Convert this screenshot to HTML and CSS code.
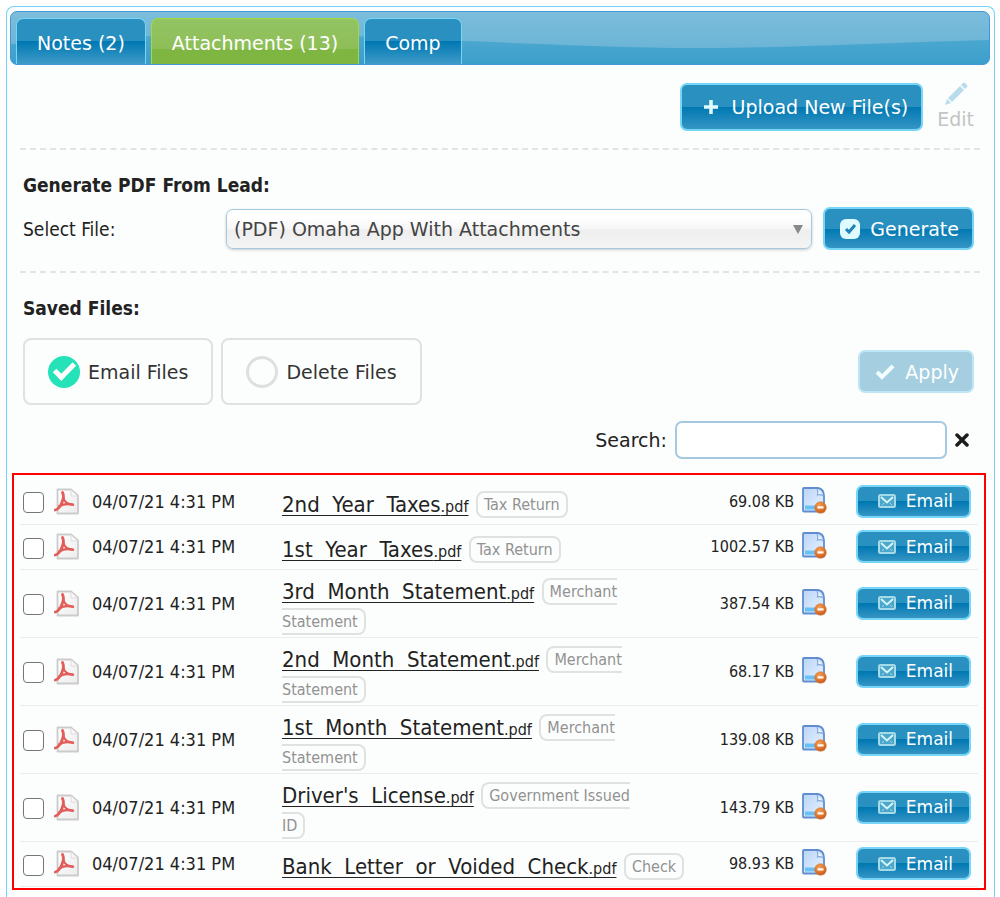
FILE: index.html
```html
<!DOCTYPE html>
<html lang="en">

<head>
    <meta charset="UTF-8">
    <meta name="viewport" content="width=device-width, initial-scale=1.0">
    <title>Attachments</title>
    <link rel="stylesheet" href="styles.css">
</head>

<body>
    <!-- shared icons -->
    <svg class="sprite" aria-hidden="true">
        <defs>
            <linearGradient id="doc-fill" x1="0" y1="0" x2="1" y2="1">
                <stop offset="0" stop-color="#b9d4f7" />
                <stop offset="1" stop-color="#eaf3fe" />
            </linearGradient>
            <radialGradient id="minus-fill" cx="0.4" cy="0.3" r="0.8">
                <stop offset="0" stop-color="#f5a053" />
                <stop offset="1" stop-color="#c9500c" />
            </radialGradient>
            <linearGradient id="paper-fill" x1="0" y1="0" x2="1" y2="1">
                <stop offset="0" stop-color="#ffffff" />
                <stop offset="1" stop-color="#ececec" />
            </linearGradient>
        </defs>
        <symbol id="pdf" viewBox="0 0 27 27">
            <path d="M3.500 1.500H17l7 6V25.500H3.500z" fill="url(#paper-fill)" stroke="#cbcbcb" stroke-width="1.800" stroke-linejoin="round" />
            <path d="M17 2v6h6.500" fill="#f7f7f7" stroke="#dcdcdc" />
            <g fill="none" stroke="#e25d59" stroke-linecap="round">
                <path d="M8.500 4.500c1.500 3 1 7-1 11-1.500 3.200-4 6-6.300 6.500" stroke-width="2.800" />
                <path d="M9.300 9c.8 4.500 3.500 7.300 9.500 7.800" stroke-width="2" />
                <path d="M5 18.500c4-2.500 9-3.200 14-1.800" stroke-width="2.400" />
            </g>
        </symbol>
        <symbol id="doc" viewBox="0 0 26 28">
            <path d="M3 2h14q6 1 6 8v15.500H3q-1 0-1-1V3q0-1 1-1z" fill="url(#doc-fill)" stroke="#5f8dcf" stroke-width="1.800" stroke-linejoin="round" />
            <path d="M16 3q1.500 3 .5 6 3-1 6 1" fill="#f5faff" stroke="#84a9dd" stroke-width="1.200" />
            <path d="M4 19.500h11V23.500H4z" fill="#66c2f5" />
            <circle cx="19.500" cy="21.500" r="5.800" fill="url(#minus-fill)" stroke="#d27a3e" stroke-width=".6" />
            <path d="M16.500 20.300h6v2.200h-6z" fill="#fff" />
        </symbol>
        <symbol id="mail" viewBox="0 0 18 14">
            <rect x="1" y="1" width="16" height="12" rx="1.500" fill="#4ba8cc" stroke="#a5dae8" stroke-width="2" />
            <path d="M3 3l6 5.500L15 3" fill="none" stroke="#d5f5f8" stroke-width="2" />
            <path d="M4 11l2-2m8 2l-2-2" stroke="#9ed8e8" />
        </symbol>
    </svg>

    <div class="panel">
        <nav class="tabs">
            <svg class="gloss" viewBox="0 0 978 52" preserveAspectRatio="none" aria-hidden="true">
                <path d="M0 0H978V28C860 31 780 36 690 36C600 36 520 31 450 29C300 20 160 20 0 32Z" />
            </svg>
            <a class="tab" href="#notes">Notes (2)</a>
            <a class="tab active" href="#attachments">Attachments (13)</a>
            <a class="tab" href="#comp">Comp</a>
        </nav>

        <div class="content">
            <div class="toolbar">
                <button class="btn btn-large">
                    <svg width="14" height="14" viewBox="0 0 14 14" aria-hidden="true">
                        <path d="M7 0v14M0 7h14" stroke="#e0fbff" stroke-width="3.500" />
                    </svg>
                    Upload New File(s)
                </button>
                <button class="edit" disabled>
                    <svg width="24" height="24" viewBox="0 0 24 24" fill="#b9dcec" aria-hidden="true">
                        <path d="M1 23l2-6 4 4zM4 16L16 4l4 4L8 20zM17 3l2-2q1-1 2 0l2 2q1 1 0 2l-2 2z" />
                    </svg>
                    Edit
                </button>
            </div>

            <section class="section">
                <h2>Generate PDF From Lead:</h2>
                <div class="generate">
                    <label for="file">Select File:</label>
                    <div class="select-wrap">
                        <select id="file">
                            <option>(PDF) Omaha App With Attachments</option>
                        </select>
                    </div>
                    <button class="btn">
                        <svg width="20" height="20" viewBox="0 0 20 20" aria-hidden="true">
                            <rect width="20" height="20" rx="6" fill="#e0fbff" />
                            <path d="M6 10l3 3 6-7" fill="none" stroke="#1d84b5" stroke-width="3" />
                        </svg>
                        Generate
                    </button>
                </div>
            </section>

            <section class="section">
                <h2>Saved Files:</h2>
                <div class="actions">
                    <label class="choice"><input type="radio" name="action" checked>Email Files</label>
                    <label class="choice"><input type="radio" name="action">Delete Files</label>
                    <button class="btn apply" disabled>
                        <svg width="20" height="16" viewBox="0 0 20 16" aria-hidden="true">
                            <path d="M2 8l5 5L18 2" fill="none" stroke="#f2fdff" stroke-width="4" />
                        </svg>
                        Apply
                    </button>
                </div>
                <div class="search">
                    <label for="search">Search:</label>
                    <input id="search" type="text">
                    <button class="clear" aria-label="Clear">
                        <svg width="14" height="14" viewBox="0 0 14 14" aria-hidden="true">
                            <path d="M2 2l10 10M12 2L2 12" stroke="#1c1c1c" stroke-width="3.500" stroke-linecap="round" />
                        </svg>
                    </button>
                </div>
            </section>
        </div>

        <div class="files">
            <table>
                <tbody id="rows"></tbody>
            </table>
        </div>
    </div>

    <script src="script.js"></script>
</body>

</html>
```

FILE: styles.css
```css
* {
    box-sizing: border-box;
}

body {
    margin: 0;
    padding: 6px 5px 0 6px;
    min-height: 100vh;
    display: flex;
    overflow: hidden;
    font-family: "DejaVu Sans Condensed", "DejaVu Sans", sans-serif;
    font-size: 19px;
    color: #222;
}

.sprite {
    position: absolute;
    width: 0;
    height: 0;
}

.panel {
    flex: 1;
    min-width: 0;
    padding: 4px 4px 0 3px;
    border: 1px solid #76d3fa;
    border-bottom: 0;
    border-radius: 8px 8px 0 0;
    background: #fcfefd;
}

/* tab bar */
.tabs {
    position: relative;
    display: flex;
    align-items: flex-end;
    gap: 5px;
    height: 54px;
    padding: 0 5px;
    overflow: hidden;
    border: 1px solid #4297d7;
    border-radius: 7px;
    background: linear-gradient(#5cb0d4, #3b9fcb);
}

.gloss {
    position: absolute;
    inset: 0;
    width: 100%;
    height: 100%;
    fill: rgba(200, 220, 235, 0.3);
}

.tab {
    position: relative;
    height: 46px;
    padding: 0 20px;
    border: 1px solid #77d5f7;
    border-bottom: 0;
    border-radius: 7px 7px 0 0;
    background: linear-gradient(#2a90c0 50%, #0078b2 50%, #3f9bc8);
    color: #fff;
    font-family: "DejaVu Sans", sans-serif;
    font-size: 19px;
    line-height: 48px;
    text-decoration: none;
}

.tab.active {
    border-color: #a5d93c;
    background: linear-gradient(#93c464, #8dbe56 66%, #7fb641 66%);
}

.content {
    padding: 0 10px;
}

/* buttons */
.btn {
    display: flex;
    align-items: center;
    justify-content: flex-end;
    gap: 10px;
    height: 43px;
    padding: 0 13px 0 15px;
    border: 2px solid #77d5f7;
    border-radius: 7px;
    background: linear-gradient(#2a90c0 50%, #0078b2 50%, #3595c4);
    color: #fff;
    font-family: "DejaVu Sans", sans-serif;
    font-size: 19px;
}

.btn-large {
    height: 48px;
    padding-left: 22px;
    gap: 14px;
}

.btn-small {
    width: 115px;
    height: 33px;
    padding: 0 16px;
    gap: 10px;
    font-size: 17px;
}

.toolbar {
    display: flex;
    justify-content: flex-end;
    align-items: center;
    gap: 14px;
    height: 85px;
    padding-right: 6px;
    border-bottom: 2px dashed #e2e4e3;
}

.edit {
    display: flex;
    flex-direction: column;
    align-items: center;
    padding: 0;
    border: 0;
    background: none;
    color: #c3c4c4;
    font-family: "DejaVu Sans", sans-serif;
    font-size: 19px;
    line-height: 26px;
}

.section {
    padding: 23px 6px 0 3px;
}

.section:nth-child(2) {
    height: 123px;
    border-bottom: 2px dashed #e2e4e3;
}

h2 {
    margin: 0;
    font-size: 19px;
    line-height: 24px;
}

.generate {
    display: grid;
    grid-template-columns: 192px 1fr auto;
    align-items: center;
    column-gap: 11px;
    margin-top: 10px;
}

.select-wrap {
    position: relative;
}

.select-wrap::after {
    content: "";
    position: absolute;
    right: 9px;
    top: 16px;
    border: 5px solid transparent;
    border-top: 9px solid #888;
    border-bottom: 0;
}

select {
    appearance: none;
    width: 100%;
    height: 40px;
    padding: 0 7px;
    border: 1px solid #a6c9e2;
    border-radius: 7px;
    background: linear-gradient(#fff 20%, #f6f6f6 50%, #eee 52%, #f4f4f4);
    box-shadow: 0 1px 3px rgba(0, 0, 0, 0.2);
    color: #444;
    font-family: "DejaVu Sans", sans-serif;
    font-size: 19px;
}

.actions {
    display: flex;
    align-items: center;
    gap: 8px;
    margin-top: 18px;
}

.choice {
    display: flex;
    align-items: center;
    gap: 8px;
    height: 67px;
    padding: 0 23px;
    border: 2px solid #e0e1e1;
    border-radius: 8px;
    color: #333;
    font-family: "DejaVu Sans", sans-serif;
    font-size: 19px;
}

.choice input {
    appearance: none;
    width: 32px;
    height: 32px;
    margin: 0;
    border: 3px solid #dfdfdf;
    border-radius: 50%;
}

.choice input:checked {
    display: grid;
    place-items: center;
    border: 0;
    background: #25e2b8;
}

.choice input:checked::before {
    content: "";
    width: 16px;
    height: 7px;
    margin-top: -5px;
    border: solid #fff;
    border-width: 0 0 5px 5px;
    transform: rotate(-45deg);
}

.apply {
    margin-left: auto;
    border-color: #bfe6f6;
    background: #a5cfe1;
}

.search {
    display: flex;
    align-items: center;
    justify-content: flex-end;
    margin-top: 16px;
    font-family: "DejaVu Sans", sans-serif;
    font-size: 19px;
}

.search input {
    width: 272px;
    height: 38px;
    margin: 0 8px;
    border: 2px solid #a6c9e2;
    border-radius: 7px;
    background: #fff;
    font: inherit;
}

.clear {
    display: flex;
    padding: 0;
    margin-right: 5px;
    border: 0;
    background: none;
}

/* file list */
.files {
    margin: 14px 4px 0 2px;
    padding: 4px 6px 1px;
    border: 2px solid #f00;
}

table {
    width: 100%;
    border-collapse: collapse;
    table-layout: fixed;
}

td {
    height: 45px;
    padding: 0;
    border-bottom: 1px solid #ececec;
    vertical-align: middle;
}

.col-check {
    width: 34px;
    padding-left: 3px;
}

.col-icon {
    width: 38px;
}

.col-date {
    width: 190px;
    font-size: 18px;
}

.col-size {
    width: 104px;
    text-align: right;
    font-size: 16px;
}

.col-remove {
    width: 62px;
    padding: 0 0 3px 7px;
}

.col-email {
    width: 122px;
}

td svg {
    display: block;
}

td input {
    appearance: none;
    display: block;
    width: 21px;
    height: 21px;
    margin: 3px 0 0;
    border: 1px solid #767676;
    border-radius: 4px;
    background: #fff;
}

.col-name {
    padding: 7px 0 0;
    line-height: 30px;
}

.name {
    margin-right: 2px;
    color: #222;
    font-size: 22px;
    line-height: 22px;
    text-decoration-thickness: 1px;
    text-underline-offset: 3px;
    text-decoration-skip-ink: none;
    white-space: pre;
}

.ext {
    font-size: 16px;
}

.tag {
    padding: 2px 6px;
    border: 2px solid #e0e1e1;
    border-radius: 8px;
    color: #929292;
    font-size: 16px;
    line-height: 16px;
    vertical-align: 2px;
}
```

FILE: script.js
```js
const files = [
    ["2nd  Year  Taxes", "Tax Return", "69.08 KB"],
    ["1st  Year  Taxes", "Tax Return", "1002.57 KB"],
    ["3rd  Month  Statement", "Merchant<br>Statement", "387.54 KB"],
    ["2nd  Month  Statement", "Merchant<br>Statement", "68.17 KB"],
    ["1st  Month  Statement", "Merchant<br>Statement", "139.08 KB"],
    ["Driver's  License", "Government Issued<br>ID", "143.79 KB"],
    ["Bank  Letter  or  Voided  Check", "Check", "98.93 KB"]
];

document.getElementById("rows").innerHTML = files.map(([name, tag, size]) => `
    <tr>
        <td class="col-check"><input type="checkbox" aria-label="${name}"></td>
        <td class="col-icon"><svg width="27" height="27"><use href="#pdf"/></svg></td>
        <td class="col-date">04/07/21 4:31 PM</td>
        <td class="col-name"><a class="name" href="#">${name}<span class="ext">.pdf</span></a> <span class="tag">${tag}</span></td>
        <td class="col-size">${size}</td>
        <td class="col-remove"><svg width="26" height="28"><use href="#doc"/></svg></td>
        <td class="col-email"><button class="btn btn-small"><svg width="18" height="14"><use href="#mail"/></svg>Email</button></td>
    </tr>`).join("");
```
